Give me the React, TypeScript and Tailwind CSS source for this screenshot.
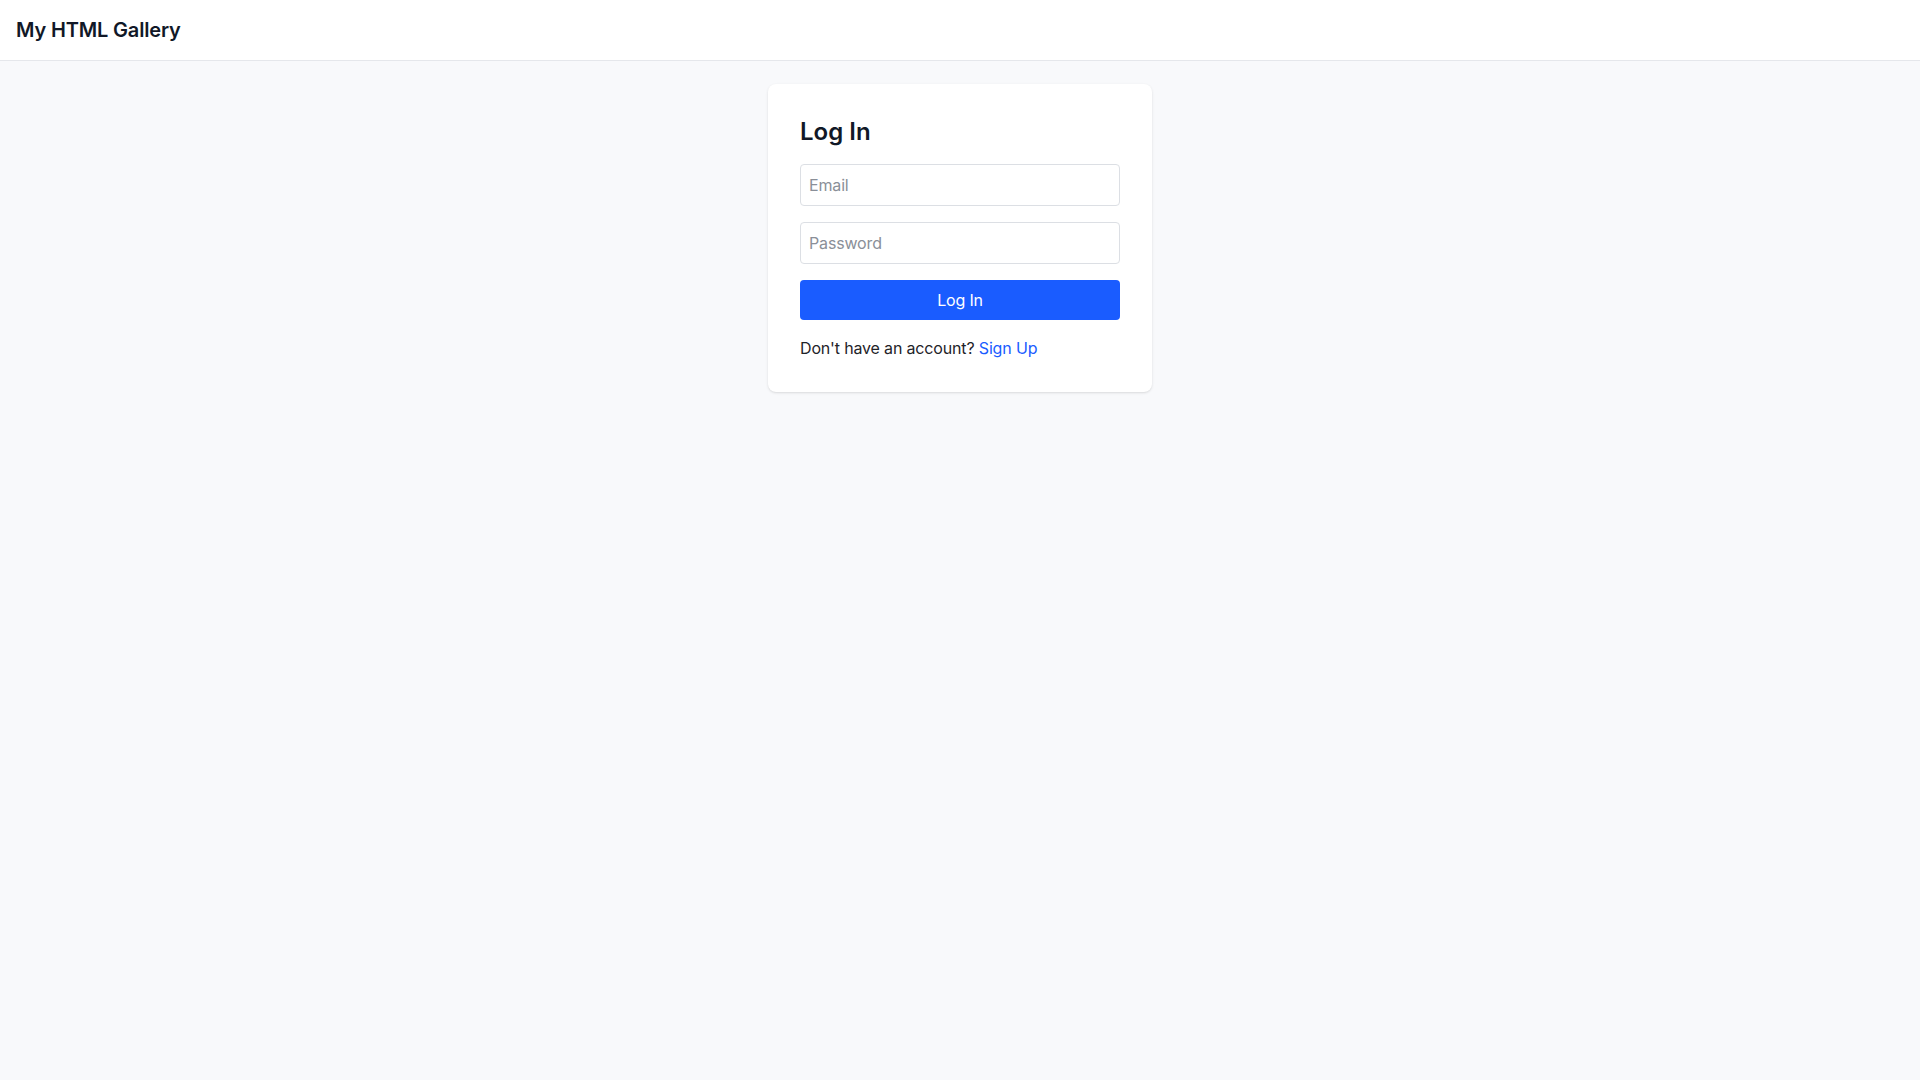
const App = () => {
  return (
    <div className="min-h-screen bg-[#f8f9fb] font-['Inter','Liberation_Sans',sans-serif] tracking-[-0.01em] text-[#1f2937]">
      <header className="flex h-[61px] items-center border-b border-[#e5e7eb] bg-white px-4">
        <h1 className="text-xl font-semibold text-[#111827]">My HTML Gallery</h1>
      </header>

      <main className="flex justify-center pt-[23px]">
        <div className="w-96 rounded-lg bg-white p-8 shadow-sm">
          <h2 className="mb-4 text-2xl font-semibold tracking-normal text-[#111827]">Log In</h2>
          <form onSubmit={(e) => e.preventDefault()}>
            <input
              type="email"
              placeholder="Email"
              className="mb-4 block w-full rounded border border-[#dcdfe4] px-2 py-2 text-base text-[#111827] placeholder:text-[#8a8f98] outline-none"
            />
            <input
              type="password"
              placeholder="Password"
              className="mb-4 block w-full rounded border border-[#dcdfe4] px-2 py-2 text-base text-[#111827] placeholder:text-[#8a8f98] outline-none"
            />
            <button
              type="submit"
              className="block w-full rounded bg-[#1a5cff] py-2 text-base text-white"
            >
              Log In
            </button>
          </form>
          <p className="mt-4 text-base text-[#1f2329]">
            Don't have an account?{" "}
            <a href="#" className="text-[#1a5cff]">
              Sign Up
            </a>
          </p>
        </div>
      </main>
    </div>
  );
};

export default App;
